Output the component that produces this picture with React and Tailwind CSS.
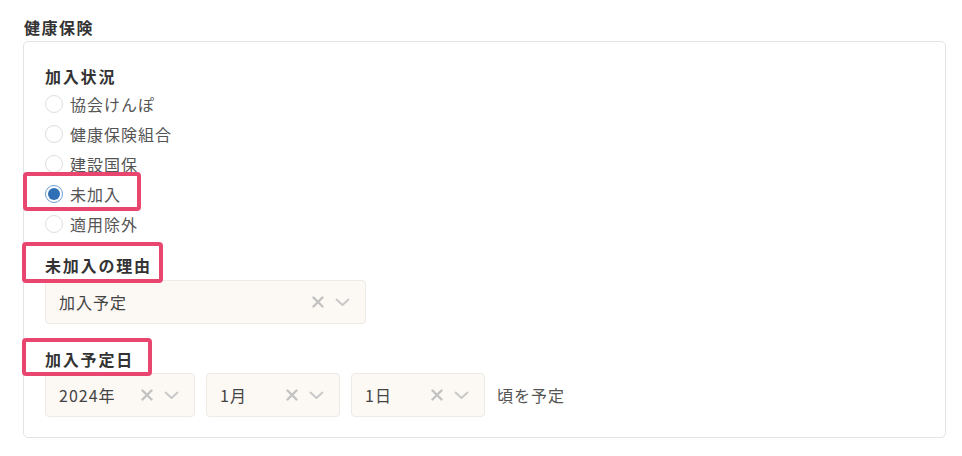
const OPTIONS = ['協会けんぽ', '健康保険組合', '建設国保', '未加入', '適用除外']

const FONT = "font-['Noto_Sans_CJK_JP','Noto_Sans',sans-serif]"

function XIcon() {
  return (
    <svg width="12" height="12" viewBox="0 0 12 12" className="shrink-0">
      <path d="M1.5 1.5 L10.5 10.5 M10.5 1.5 L1.5 10.5" stroke="#c2c2c2" strokeWidth="2.4" strokeLinecap="round" />
    </svg>
  )
}

function Chevron() {
  return (
    <svg width="15" height="9" viewBox="0 0 15 9" className="shrink-0">
      <path d="M1.5 1.5 L7.5 7 L13.5 1.5" stroke="#c7c7c7" strokeWidth="1.8" fill="none" strokeLinecap="round" strokeLinejoin="round" />
    </svg>
  )
}

function Select({ value, className }) {
  return (
    <div className={`flex h-[44px] items-center rounded-[4px] border border-[#eeeae5] bg-[#fcf8f3] pl-[13px] pr-[15px] ${className}`}>
      <span className="flex-1 text-[#444]">{value}</span>
      <div className="flex items-center gap-[11px]">
        <XIcon />
        <Chevron />
      </div>
    </div>
  )
}

function Marked({ children, className }) {
  return (
    <span className="relative inline-flex">
      {children}
      <span className={`pointer-events-none absolute rounded-[4px] border-[4px] border-[#e8466f] ${className}`} />
    </span>
  )
}

function Radio({ label, checked }) {
  return (
    <label className="flex h-[30px] items-center gap-[7px] text-[#555]">
      {checked ? (
        <span className="flex h-[18px] w-[18px] items-center justify-center rounded-full border border-[#6c9fd6] bg-white">
          <span className="h-[12px] w-[12px] rounded-full bg-[#2f6fb5]" />
        </span>
      ) : (
        <span className="h-[18px] w-[18px] rounded-full border border-[#dedede] bg-white" />
      )}
      <span>{label}</span>
    </label>
  )
}

export default function App() {
  return (
    <div className={`min-h-[456px] bg-white pl-[23px] pr-[16px] pt-[15px] text-[16px] leading-[24px] tracking-[1px] ${FONT}`}>
      <h2 className="mb-[2px] pl-[1px] font-bold tracking-[1.5px] text-[#333]">健康保険</h2>
      <div className="rounded-[5px] border border-[#e4e4e4] px-[21px] pb-[20px] pt-[22px]">
        <p className="font-bold tracking-[1.8px] text-[#333]">加入状況</p>
        <div className="mt-[1px] flex flex-col">
          {OPTIONS.map((o) =>
            o === '未加入' ? (
              <div key={o}>
                <Marked className="-bottom-[2px] -left-[22px] -right-[20px] -top-[7px]">
                  <Radio label={o} checked />
                </Marked>
              </div>
            ) : (
              <Radio key={o} label={o} />
            )
          )}
        </div>

        <div className="mt-[14px]">
          <Marked className="-bottom-[6px] -left-[23px] -right-[11px] -top-[11px]">
            <p className="font-bold tracking-[1.8px] text-[#333]">未加入の理由</p>
          </Marked>
        </div>
        <Select value="加入予定" className="mt-[3px] w-[321px]" />

        <div className="mt-[23px]">
          <Marked className="-bottom-[5px] -left-[23px] -right-[18px] -top-[9px]">
            <p className="font-bold tracking-[1.8px] text-[#333]">加入予定日</p>
          </Marked>
        </div>
        <div className="mt-[2px] flex items-center gap-[11px]">
          <Select value="2024年" className="w-[150px]" />
          <Select value="1月" className="w-[134px]" />
          <Select value="1日" className="w-[134px]" />
          <span className="ml-[1px] text-[#555]">頃を予定</span>
        </div>
      </div>
    </div>
  )
}
